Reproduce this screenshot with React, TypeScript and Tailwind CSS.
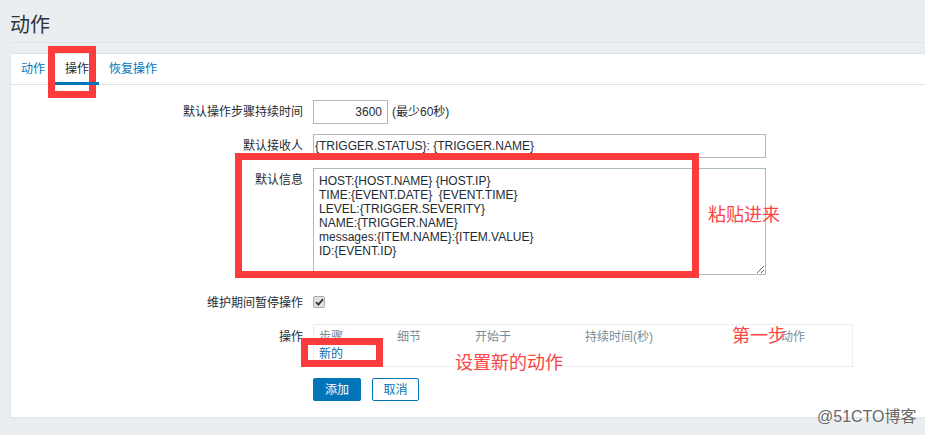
import React from "react";

const FONT = "font-['Liberation_Sans','Noto_Sans_CJK_SC',Arial,sans-serif]";
const CJK = "font-['Noto_Sans_CJK_SC','Liberation_Sans',sans-serif]";

function Label({ children, className = "" }: { children: React.ReactNode; className?: string }) {
  return (
    <div className={`w-[292px] shrink-0 text-right text-[12px] text-[#1f2c33] ${className}`}>{children}</div>
  );
}

export default function App() {
  const message = [
    "HOST:{HOST.NAME} {HOST.IP}",
    "TIME:{EVENT.DATE}  {EVENT.TIME}",
    "LEVEL:{TRIGGER.SEVERITY}",
    "NAME:{TRIGGER.NAME}",
    "messages:{ITEM.NAME}:{ITEM.VALUE}",
    "ID:{EVENT.ID}",
  ].join("\n");

  return (
    <div className={`relative w-[925px] h-[435px] overflow-hidden bg-[#ebeef0] ${FONT}`}>
      {/* Header */}
      <div className="ml-[10px] h-[43px] border-b border-[#dfe4e7] pt-[10px]">
        <h1 className={`text-[20px] leading-[28px] text-[#2a353b] ${CJK}`}>动作</h1>
      </div>

      {/* Panel */}
      <div className="mt-[10px] ml-[10px] h-[365px] border border-r-0 border-[#dfe4e7] bg-white">
        {/* Tabs */}
        <div className="flex h-[31px] border-b border-[#dfe4e7] text-[12px]">
          <div className="flex h-full items-center px-[10px] text-[#0275b8]">动作</div>
          <div className="relative flex h-full items-center px-[10px] text-[#1f2c33]">
            操作
            <span className="absolute left-0 right-0 bottom-[-1px] z-20 h-[3px] bg-[#0275b8]" />
          </div>
          <div className="flex h-full items-center px-[10px] text-[#0275b8]">恢复操作</div>
        </div>

        {/* Form */}
        <div className="pt-[15px]">
          {/* Row 1 */}
          <div className="flex items-center gap-[10px]">
            <Label className="leading-[24px]">默认操作步骤持续时间</Label>
            <div className="flex h-[24px] w-[75px] items-center justify-end border border-[#acbbc2] pr-[5px] text-[12px] text-[#1f2c33]">
              3600
            </div>
            <span className="-ml-[6px] text-[12px] text-[#1f2c33]">(最少60秒)</span>
          </div>

          {/* Row 2 */}
          <div className="mt-[10px] flex items-center gap-[10px]">
            <Label className="leading-[24px]">默认接收人</Label>
            <div className="flex h-[24px] w-[453px] items-center border border-[#acbbc2] pl-[1px] text-[12px] text-[#1f2c33]">
              {"{TRIGGER.STATUS}: {TRIGGER.NAME}"}
            </div>
          </div>

          {/* Row 3 */}
          <div className="mt-[10px] flex items-start gap-[10px]">
            <Label className="pt-[5px] leading-[14px]">默认信息</Label>
            <textarea
              readOnly
              defaultValue={message}
              className="block h-[107px] w-[453px] border border-[#acbbc2] px-[5px] pt-[5px] text-[12px] leading-[14px] text-[#1f2c33] outline-none"
            />
          </div>

          {/* Row 4 */}
          <div className="mt-[16px] flex h-[24px] items-center gap-[10px]">
            <Label className="leading-[24px]">维护期间暂停操作</Label>
            <div className="flex h-[12px] w-[12px] -translate-y-[1px] items-center justify-center rounded-[2px] border border-[#a9a9a9] bg-[#e2e2e2]">
              <svg width="9" height="8" viewBox="0 0 9 8">
                <path d="M1 4.2 L3.4 6.6 L8 1.2" fill="none" stroke="#333" strokeWidth="1.8" />
              </svg>
            </div>
          </div>

          {/* Row 5 */}
          <div className="mt-[9px] flex items-start gap-[10px]">
            <Label className="pt-[6px] leading-[14px]">操作</Label>
            <div className="w-[540px] border border-[#ebeef0] text-[12px]">
              <div className="grid grid-cols-[78px_78px_110px_196px_1fr] pt-[5px] pb-[3px] leading-[14px] text-[#768d99]">
                <div className="pl-[5px]">步骤</div>
                <div className="pl-[5px]">细节</div>
                <div className="pl-[5px]">开始于</div>
                <div className="pl-[5px]">持续时间(秒)</div>
                <div className="pl-[5px]">动作</div>
              </div>
              <div className="pb-[5px] pl-[5px] leading-[14px] text-[#0f6aa6]">新的</div>
            </div>
          </div>

          {/* Row 6 */}
          <div className="mt-[11px] flex gap-[11px] pl-[302px]">
            <button className="h-[23px] w-[48px] rounded-[2px] bg-[#0275b8] text-[12px] text-white">添加</button>
            <button className="h-[23px] w-[47px] rounded-[2px] border border-[#0275b8] bg-white text-[12px] text-[#0275b8]">取消</button>
          </div>
        </div>
      </div>

      {/* Red annotations */}
      <div className="absolute left-[48px] top-[46px] z-10 h-[52px] w-[48px] border-[7px] border-[#fc3c3c]" />
      <div className="absolute left-[235px] top-[153px] z-10 h-[125px] w-[464px] border-[7px] border-[#fc3c3c]" />
      <div className="absolute left-[301px] top-[338px] z-10 h-[29px] w-[82px] border-[7px] border-[#fc3c3c]" />
      <div className={`absolute left-[708px] top-[200px] z-10 text-[18px] leading-[26px] text-[#fc4444] ${CJK}`}>粘贴进来</div>
      <div className={`absolute left-[455px] top-[348px] z-10 text-[18px] leading-[26px] text-[#fc4444] ${CJK}`}>设置新的动作</div>
      <div className={`absolute left-[732px] top-[321px] z-10 text-[18px] leading-[26px] text-[#fc4444] ${CJK}`}>第一步</div>

      {/* Watermark */}
      <div className="absolute left-[817px] top-[405px] z-10 text-[16px] leading-[24px] text-[#666] [text-shadow:0_0_2px_#fff]">
        @51CTO博客
      </div>
    </div>
  );
}
